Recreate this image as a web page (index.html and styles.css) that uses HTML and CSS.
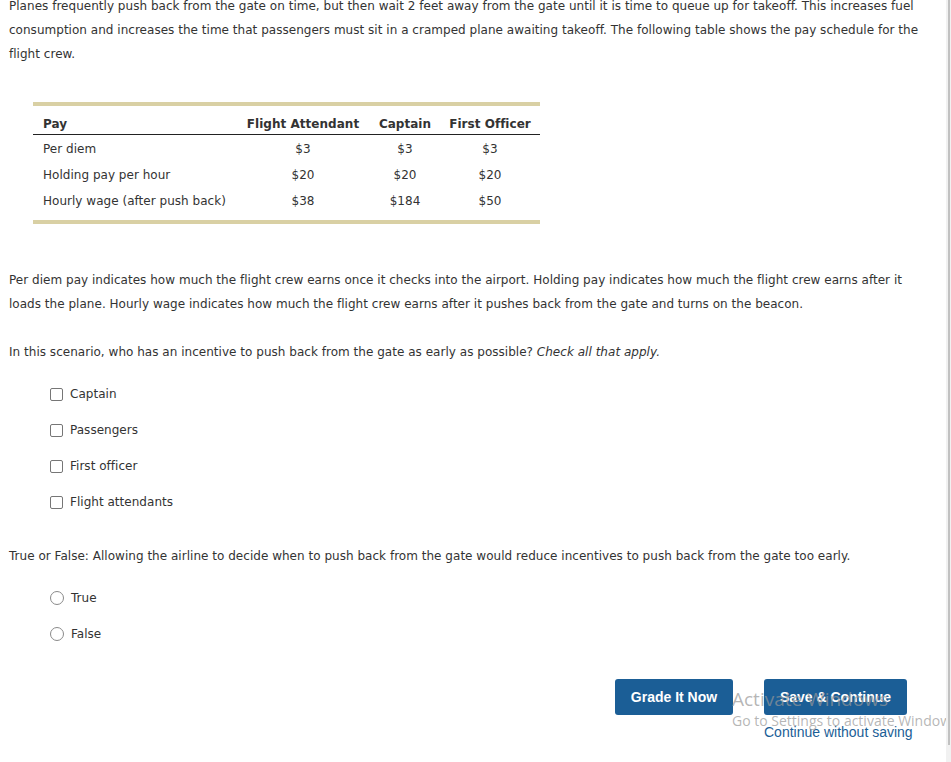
FILE: index.html
```html
<!DOCTYPE html>
<html>
<head>
<meta charset="utf-8">
<link rel="stylesheet" href="styles.css">
</head>
<body>
<div class="page">
  <p class="para first">Planes frequently push back from the gate on time, but then wait 2 feet away from the gate until it is time to queue up for takeoff. This increases fuel consumption and increases the time that passengers must sit in a cramped plane awaiting takeoff. The following table shows the pay schedule for the flight crew.</p>

  <table class="pay">
    <thead>
      <tr><th class="c-pay">Pay</th><th class="c-fa">Flight Attendant</th><th class="c-cap">Captain</th><th class="c-fo">First Officer</th></tr>
    </thead>
    <tbody>
      <tr class="firstrow"><td class="lbl">Per diem</td><td>$3</td><td>$3</td><td>$3</td></tr>
      <tr><td class="lbl">Holding pay per hour</td><td>$20</td><td>$20</td><td>$20</td></tr>
      <tr class="last"><td class="lbl">Hourly wage (after push back)</td><td>$38</td><td>$184</td><td>$50</td></tr>
    </tbody>
  </table>

  <p class="para p2">Per diem pay indicates how much the flight crew earns once it checks into the airport. Holding pay indicates how much the flight crew earns after it loads the plane. Hourly wage indicates how much the flight crew earns after it pushes back from the gate and turns on the beacon.</p>

  <p class="para q1">In this scenario, who has an incentive to push back from the gate as early as possible? <em>Check all that apply.</em></p>

  <ul class="opts">
    <li><span class="box"></span>Captain</li>
    <li><span class="box"></span>Passengers</li>
    <li><span class="box"></span>First officer</li>
    <li><span class="box"></span>Flight attendants</li>
  </ul>

  <p class="para q2">True or False: Allowing the airline to decide when to push back from the gate would reduce incentives to push back from the gate too early.</p>

  <ul class="opts radios">
    <li><span class="radio"></span>True</li>
    <li><span class="radio"></span>False</li>
  </ul>

  <div class="actions">
    <button class="btn btn-grade">Grade It Now</button>
    <div class="save-col">
      <button class="btn btn-save">Save &amp; Continue</button>
      <a class="link">Continue without saving</a>
    </div>
  </div>
</div>
<div class="watermark">
  <div class="wm1">Activate Windows</div>
  <div class="wm2">Go to Settings to activate Windows.</div>
</div>
<div class="scrollbar"><div class="thumb"></div></div>
</body>
</html>
```
FILE: styles.css
```css
html, body {
  margin: 0;
  padding: 0;
  background: #fff;
  overflow: hidden;
}
body {
  font-family: Verdana, "DejaVu Sans", sans-serif;
  font-size: 12px;
  letter-spacing: 0.025px;
  color: #333;
  width: 951px;
  height: 762px;
  position: relative;
}
.page {
  padding: 0 20px 0 9px;
}
.para {
  margin: 0;
  line-height: 24px;
}
.para.first {
  margin-top: -6px;
}
.pay {
  margin: 36px 0 0 24px;
  width: 507px;
  border-collapse: collapse;
  border-top: 4px solid #d9d0a4;
  border-bottom: 4px solid #d9d0a4;
  font-size: 12px;
}
.pay th {
  font-weight: bold;
  text-align: center;
  height: 28px;
  line-height: 20px;
  padding: 8px 0 0;
  box-sizing: border-box;
  border-bottom: 1px solid #222;
  white-space: nowrap;
  vertical-align: top;
}
.pay th.c-pay { text-align: left; padding-left: 10px; }
.pay td {
  text-align: center;
  height: 26px;
  line-height: 26px;
  padding: 0;
  white-space: nowrap;
}
.pay td.lbl { text-align: left; padding-left: 10px; }
.pay tr.firstrow td { height: 27px; padding-top: 1px; box-sizing: border-box; line-height: 26px; }
.pay tr.last td { height: 32px; padding-bottom: 6px; box-sizing: border-box; }
.c-fa { width: 134px; }
.c-cap { width: 70px; }
.c-fo { width: 100px; }
.p2 { margin-top: 44px; }
.q1 { margin-top: 24px; }
.opts {
  list-style: none;
  margin: 12px 0 0 41px;
  padding: 0;
}
.opts li {
  display: flex;
  align-items: center;
  height: 36px;
}
.box {
  width: 11px;
  height: 11px;
  border: 1px solid #767676;
  border-radius: 2px;
  margin-right: 7px;
}
.radio {
  width: 12px;
  height: 12px;
  border: 1px solid #8a8a8a;
  border-radius: 50%;
  margin-right: 7px;
}
.q2 { margin-top: 24px; }
.radios { margin-top: 12px; }
.actions {
  display: flex;
  gap: 31px;
  margin: 27px 0 0 606px;
  align-items: flex-start;
}
.btn {
  background: #1b5e96;
  color: #fff;
  border: none;
  border-radius: 3px;
  font-family: "Liberation Sans", Arial, sans-serif;
  font-weight: bold;
  font-size: 14px;
  letter-spacing: 0;
  height: 36px;
  padding: 0;
  cursor: pointer;
}
.btn-grade { width: 118px; }
.btn-save { width: 143px; }
.save-col {
  display: flex;
  flex-direction: column;
  align-items: flex-start;
}
.link {
  font-family: "Liberation Sans", Arial, sans-serif;
  font-size: 14px;
  letter-spacing: 0;
  color: #1b5e96;
  margin-top: 9px;
  line-height: 16px;
  white-space: nowrap;
}
.watermark {
  position: absolute;
  left: 732px;
  top: 686px;
  color: rgba(150,150,150,0.7);
  font-family: "Open Sans", "Noto Sans", sans-serif;
  letter-spacing: 0;
  white-space: nowrap;
  pointer-events: none;
}
.wm1 { font-size: 19px; line-height: 26px; }
.wm2 { font-size: 14px; line-height: 20px; margin-top: -1px; }
.scrollbar {
  position: absolute;
  right: 0;
  top: 0;
  width: 5px;
  height: 762px;
  background: #f1f1f1;
}
.thumb {
  margin: 0 0 0 2px;
  width: 2px;
  height: 745px;
  background: #c1c1c1;
}
```
